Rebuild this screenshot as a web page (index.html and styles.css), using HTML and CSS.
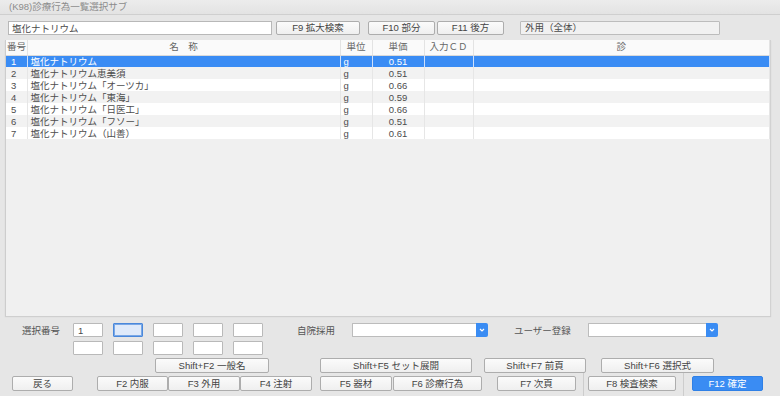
FILE: index.html
```html
<!DOCTYPE html>
<html lang="ja">
<head>
    <meta charset="UTF-8">
    <meta name="viewport" content="width=device-width, initial-scale=1.0">
    <title>(K98)診療行為一覧選択サブ</title>
    <link rel="stylesheet" href="styles.css">
</head>
<body>
    <div class="titlebar">(K98)診療行為一覧選択サブ</div>

    <div class="main">
        <div class="search-row">
            <input type="text" class="search-input" value="塩化ナトリウム">
            <button class="btn btn-f9">F9 拡大検索</button>
            <button class="btn btn-f10">F10 部分</button>
            <button class="btn btn-f11">F11 後方</button>
            <div class="kind-field">外用（全体）</div>
        </div>

        <div class="grid">
            <table id="listTable">
                <colgroup>
                    <col class="c-no">
                    <col class="c-name">
                    <col class="c-unit">
                    <col class="c-price">
                    <col class="c-code">
                    <col>
                </colgroup>
                <thead>
                    <tr>
                        <th class="left">番号</th>
                        <th>名　称</th>
                        <th>単位</th>
                        <th>単価</th>
                        <th>入力ＣＤ</th>
                        <th>診</th>
                    </tr>
                </thead>
                <tbody>
                    <tr class="selected"><td>1</td><td>塩化ナトリウム</td><td>g</td><td class="num">0.51</td><td></td><td></td></tr>
                    <tr><td>2</td><td>塩化ナトリウム恵美須</td><td>g</td><td class="num">0.51</td><td></td><td></td></tr>
                    <tr><td>3</td><td>塩化ナトリウム「オーツカ」</td><td>g</td><td class="num">0.66</td><td></td><td></td></tr>
                    <tr><td>4</td><td>塩化ナトリウム「東海」</td><td>g</td><td class="num">0.59</td><td></td><td></td></tr>
                    <tr><td>5</td><td>塩化ナトリウム「日医工」</td><td>g</td><td class="num">0.66</td><td></td><td></td></tr>
                    <tr><td>6</td><td>塩化ナトリウム「フソー」</td><td>g</td><td class="num">0.51</td><td></td><td></td></tr>
                    <tr><td>7</td><td>塩化ナトリウム（山善）</td><td>g</td><td class="num">0.61</td><td></td><td></td></tr>
                </tbody>
            </table>
        </div>
    </div>

    <div class="footer">
        <div class="select-row">
            <span class="label label-no">選択番号</span>
            <div class="no-cells">
                <input type="text" class="cell" value="1">
                <input type="text" class="cell focused" value="">
                <input type="text" class="cell" value="">
                <input type="text" class="cell" value="">
                <input type="text" class="cell" value="">
            </div>
            <span class="label label-own">自院採用</span>
            <div class="combo combo-own">
                <div class="combo-box"></div>
                <div class="combo-arrow">
                    <svg width="6" height="4" viewBox="0 0 6 4"><path d="M1 1 L3 3 L5 1" fill="none" stroke="#fff" stroke-width="1.2"/></svg>
                </div>
            </div>
            <span class="label label-user">ユーザー登録</span>
            <div class="combo combo-user">
                <div class="combo-box"></div>
                <div class="combo-arrow">
                    <svg width="6" height="4" viewBox="0 0 6 4"><path d="M1 1 L3 3 L5 1" fill="none" stroke="#fff" stroke-width="1.2"/></svg>
                </div>
            </div>
        </div>

        <div class="cells-row">
            <input type="text" class="cell" value="">
            <input type="text" class="cell" value="">
            <input type="text" class="cell" value="">
            <input type="text" class="cell" value="">
            <input type="text" class="cell" value="">
        </div>

        <div class="shift-row">
            <button class="btn btn-sf2">Shift+F2 一般名</button>
            <button class="btn btn-sf5">Shift+F5 セット展開</button>
            <button class="btn btn-sf7">Shift+F7 前頁</button>
            <button class="btn btn-sf6">Shift+F6 選択式</button>
        </div>

        <div class="fkey-row">
            <button class="btn btn-back">戻る</button>
            <button class="btn btn-f2">F2 内服</button>
            <button class="btn btn-f3">F3 外用</button>
            <button class="btn btn-f4">F4 注射</button>
            <button class="btn btn-f5">F5 器材</button>
            <button class="btn btn-f6">F6 診療行為</button>
            <button class="btn btn-f7">F7 次頁</button>
            <div class="sep sep-1"></div>
            <button class="btn btn-f8">F8 検査検索</button>
            <div class="sep sep-2"></div>
            <button class="btn btn-f12 primary">F12 確定</button>
        </div>
    </div>
</body>
</html>
```

FILE: styles.css
```css
* {
    box-sizing: border-box;
}
body {
    margin: 0;
    width: 780px;
    height: 396px;
    overflow: hidden;
    background-color: #e6e6e6;
    font-family: "Liberation Sans", "Noto Sans CJK JP", sans-serif;
    font-size: 9.5px;
    color: #4a4a4a;
}
.titlebar {
    height: 15px;
    line-height: 14px;
    padding-left: 9px;
    color: #8c8c8c;
    background: linear-gradient(#ececec, #e3e3e3);
    border-bottom: 1px solid #cfcfcf;
}
.main {
    padding: 0 9px 0 5px;
}
input, button {
    font-family: inherit;
    font-size: inherit;
    color: inherit;
    margin: 0;
    outline: none;
}
.btn {
    height: 15px;
    padding: 0;
    border: 1px solid #adadad;
    border-radius: 2px;
    background: linear-gradient(#fbfbfb, #efefef);
    color: #444;
    line-height: 13px;
    white-space: nowrap;
    cursor: pointer;
}
.btn.primary {
    background: #3a8cf3;
    border-color: #2f80e6;
    color: #fff;
}

/* search row */
.search-row {
    display: flex;
    height: 14px;
    margin-top: 6px;
    padding-left: 3px;
}
.search-input {
    width: 264px;
    height: 14px;
    padding: 0 3px;
    border: 1px solid #b8b8b8;
    background: #fff;
}
.search-row .btn {
    height: 14px;
    line-height: 12px;
}
.btn-f9 {
    width: 84px;
    margin-left: 4px;
}
.btn-f10 {
    width: 67px;
    margin-left: 8px;
}
.btn-f11 {
    width: 67px;
    margin-left: 2px;
}
.kind-field {
    width: 200px;
    height: 14px;
    margin-left: 16px;
    padding-left: 4px;
    line-height: 12px;
    border: 1px solid #bcbcbc;
    border-radius: 1px;
    background: #f1f1f1;
}

/* list */
.grid {
    height: 276px;
    margin-top: 5px;
    background: #f0f0f0;
    border-left: 1px solid #cdcdcd;
    border-right: 1px solid #d2d2d2;
    box-shadow: 0 1px 1px #cfcfcf;
}
table {
    width: 100%;
    table-layout: fixed;
    border-collapse: collapse;
}
.c-no { width: 21px; }
.c-name { width: 313px; }
.c-unit { width: 32px; }
.c-price { width: 52px; }
.c-code { width: 49px; }
th {
    height: 15px;
    padding: 0;
    line-height: 14px;
    font-weight: normal;
    color: #666;
    white-space: nowrap;
    overflow: hidden;
    background: #fafafa;
    border-right: 1px solid #e3e3e3;
    border-bottom: 1px solid #dadada;
    text-align: center;
}
th.left {
    text-align: left;
    padding-left: 1px;
}
td {
    height: 12px;
    padding: 0 3px;
    line-height: 11px;
    white-space: nowrap;
    overflow: hidden;
    background: #fff;
    border-right: 1px solid #e6e6e6;
    color: #4d4d4d;
}
td:first-child {
    padding-left: 5px;
}
td.num {
    text-align: center;
}
tbody tr:nth-child(even) td {
    background: #f2f2f2;
}
tr.selected td {
    background: #3a8cf4;
    color: #fff;
    border-right-color: #cfe0fb;
}

/* footer */
.select-row {
    display: flex;
    align-items: center;
    height: 14px;
    margin-top: 7px;
    padding-left: 22px;
}
.label {
    color: #555;
}
.label-no {
    width: 51px;
}
.no-cells, .cells-row {
    display: flex;
    gap: 10px;
}
.cell {
    width: 30px;
    height: 14px;
    padding: 0 4px;
    border: 1px solid #b9b9b9;
    border-radius: 1px;
    background: #fff;
}
.cell.focused {
    background: #dfeafa;
    border-color: #4a88db;
    box-shadow: inset 0 0 0 1px #7aa8e6;
}
.label-own {
    width: 55px;
    margin-left: 34px;
}
.label-user {
    width: 74px;
    margin-left: 26px;
}
.combo {
    display: flex;
    height: 14px;
}
.combo-own { width: 136px; }
.combo-user { width: 130px; }
.combo-box {
    flex: 1;
    border: 1px solid #bcbcbc;
    border-right: none;
    border-radius: 1px 0 0 1px;
    background: #fff;
}
.combo-arrow {
    width: 12px;
    display: flex;
    align-items: center;
    justify-content: center;
    background: #3a8cf3;
    border-radius: 0 2px 2px 0;
}
.cells-row {
    margin-top: 4px;
    padding-left: 73px;
}
.shift-row {
    display: flex;
    margin-top: 3px;
    padding-left: 155px;
}
.btn-sf2 { width: 114px; }
.btn-sf5 { width: 152px; margin-left: 51px; }
.btn-sf7 { width: 102px; margin-left: 12px; }
.btn-sf6 { width: 113px; margin-left: 15px; }
.fkey-row {
    display: flex;
    align-items: flex-start;
    height: 20px;
    margin-top: 3px;
    padding-left: 12px;
}
.btn-back { width: 61px; }
.btn-f2 { width: 71px; margin-left: 24px; }
.btn-f3 { width: 72px; }
.btn-f4 { width: 72px; }
.btn-f5 { width: 72px; margin-left: 8px; }
.btn-f6 { width: 89px; margin-left: 1px; }
.btn-f7 { width: 79px; margin-left: 15px; }
.btn-f8 { width: 88px; margin-left: 4px; }
.btn-f12 { width: 71px; margin-left: 8px; }
.sep {
    width: 1px;
    height: 23px;
    margin-top: -3px;
    background: #cdcdcd;
}
.sep-1 { margin-left: 7px; }
.sep-2 { margin-left: 7px; }
```
